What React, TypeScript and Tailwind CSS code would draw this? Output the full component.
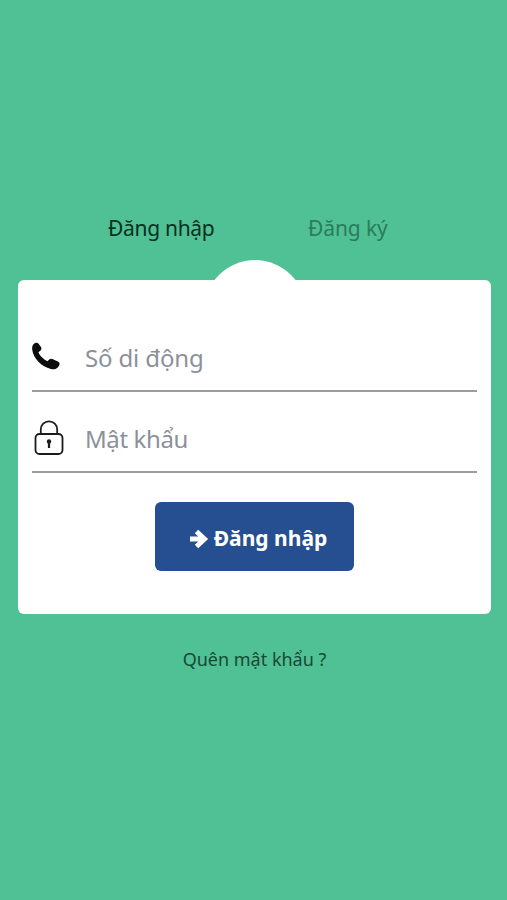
import React, { useState } from 'react';
import { clsx } from 'clsx';

type Tab = 'login' | 'register';

function PhoneIcon() {
  return (
    <svg viewBox="0 0 28 28" className="w-7 h-7" fill="#0c0c0c">
      <path d="M1.300 2.600C2.500.8 5 .2 6.400 1.500l2.400 3.200c1 1.400.7 3-.5 4L6.400 10.200c1.500 3.600 4.800 7 9 9l1.900-1.800c1.100-.9 2.500-1 3.700-.2l5.300 2.500c1.500 1 1.700 2.600.6 4.200-1.900 2.900-4.800 4-8 3C9.500 24.700 1.300 16.800.2 7.600 0 5.700.3 4 1.300 2.600z" />
    </svg>
  );
}

function LockIcon() {
  return (
    <svg viewBox="0 0 30 36" className="w-[30px] h-9" fill="none" stroke="#1b1b1b" strokeWidth="1.8">
      <path d="M6.800 14V9.500a8.200 8.200 0 0 1 16.400 0V14" />
      <rect x="1.500" y="14" width="27" height="20" rx="4" />
      <circle cx="15" cy="21.500" r="2.200" fill="#1b1b1b" stroke="none" />
      <path d="M15 21.500V28" strokeWidth="2.200" />
    </svg>
  );
}

function ArrowIcon() {
  return (
    <svg viewBox="0 0 20 22" className="w-5 h-[22px]" fill="none" stroke="#fff" strokeWidth="5">
      <path d="M1 11h14M7.500 3.500L15.500 11l-8 7.500" />
    </svg>
  );
}

export default function App() {
  const [tab, setTab] = useState<Tab>('login');

  return (
    <div className="min-h-[900px] bg-[#50c095] pt-[208px] font-['Noto_Sans','Open_Sans',sans-serif]">
      <div className="flex pl-[108px] gap-[94px] h-[72px] text-[21px] leading-10">
        <button
          onClick={() => setTab('login')}
          className={clsx('h-10 w-[106px] whitespace-nowrap tracking-[-0.3px]', tab === 'login' ? 'text-[#06301f]' : 'text-[#2a7c5b]')}
        >
          Đăng nhập
        </button>
        <button
          onClick={() => setTab('register')}
          className={clsx('h-10 w-[79px] whitespace-nowrap tracking-[-0.1px]', tab === 'register' ? 'text-[#06301f]' : 'text-[#2a7c5b]')}
        >
          Đăng ký
        </button>
      </div>

      <div className="relative ml-[18px] w-[473px] h-[334px] rounded-md bg-white px-[14px] pt-[31px]">
        <div className="absolute left-[186px] -top-5 w-[102px] h-[102px] rounded-full bg-white" />
        <form className="relative" onSubmit={e => e.preventDefault()}>
          <label className="flex items-center h-[81px] pt-[14px] border-b-2 border-[#9c9c9f]">
            <span className="w-[53px] shrink-0 pb-[3px]">
              <PhoneIcon />
            </span>
            <input
              type="tel"
              placeholder="Số di động"
              className="w-full h-10 text-2xl tracking-[-0.15px] outline-none placeholder:text-[#8b9199]"
            />
          </label>
          <label className="flex items-center h-[81px] pt-[13px] border-b-2 border-[#9c9c9f]">
            <span className="w-[53px] shrink-0 pl-[2px]">
              <LockIcon />
            </span>
            <input
              type="password"
              placeholder="Mật khẩu"
              className="w-full h-10 text-2xl tracking-[-0.4px] outline-none placeholder:text-[#8b9199]"
            />
          </label>
          <button className="mt-[29px] ml-[123px] w-[199px] h-[69px] rounded-md bg-[#264f91] flex items-center justify-center gap-[5px] pt-1 pl-[7px] text-[21px] font-bold text-white whitespace-nowrap">
            <ArrowIcon />
            Đăng nhập
          </button>
        </form>
      </div>

      <div className="pt-[31px] pl-[2px] text-center text-lg leading-7 text-[#164a36]">
        <a href="#">Quên mật khẩu ?</a>
      </div>
    </div>
  );
}
